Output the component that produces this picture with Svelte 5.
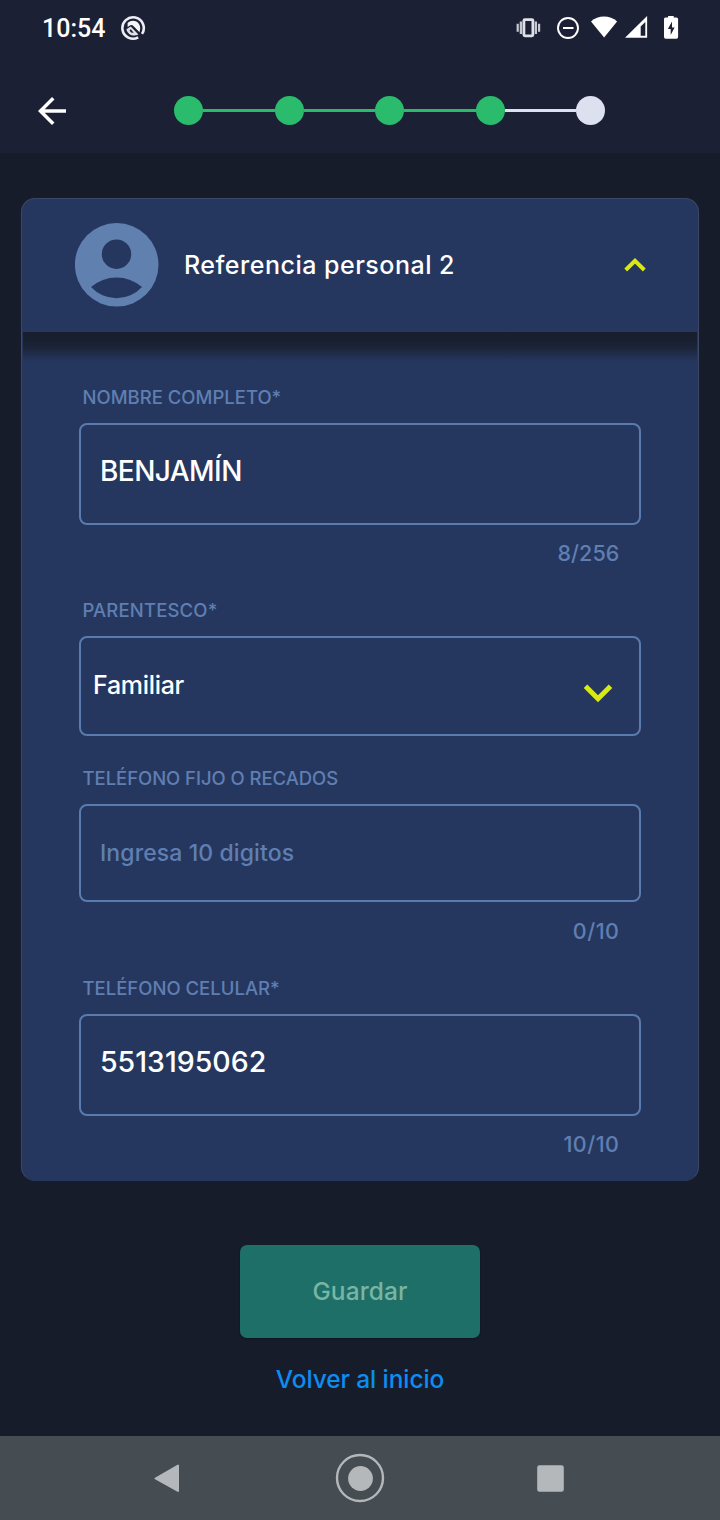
<script>
  const steps = [true, true, true, true, false];
  const fields = [
    { label: 'NOMBRE COMPLETO*', value: 'BENJAMÍN', kind: 'text name', count: '8/256', cls: 'f1' },
    { label: 'PARENTESCO*', value: 'Familiar', kind: 'select', cls: 'f2' },
    { label: 'TELÉFONO FIJO O RECADOS', value: 'Ingresa 10 digitos', kind: 'placeholder', count: '0/10', cls: 'f3' },
    { label: 'TELÉFONO CELULAR*', value: '5513195062', kind: 'text phone', count: '10/10', cls: 'f4' }
  ];
</script>

<div class="screen">
  <header class="top">
    <div class="status">
      <span class="time">10:54</span>
      <svg class="app" width="26" height="26" viewBox="0 0 26 26">
        <path d="M18.200 22.400A10.700 10.700 0 1 1 22 18.900" fill="none" stroke="#eceef4" stroke-width="2.600" />
        <path d="M7.600 8C11 4.600 16.500 5 19 9c1.700 2.800 1.500 5.800.3 8.200L12.600 10.200l-1.800-.3-3.200 2z" fill="#f4f5f9" />
        <path d="M6.400 14.200l4.300-2.600 7.700 7.800c-4.500 2.600-10.700.8-12-5.200z" fill="#dfe1ea" />
        <path d="M9.600 15.200l1.200-.9 2.900 3.500c-2 .2-3.700-.8-4.100-2.600z" fill="#1c2035" />
        <path d="M13.500 12.500l9 9" stroke="#1c2035" stroke-width="1.200" />
      </svg>
      <svg class="sys" width="168" height="28" viewBox="0 0 168 28">
        <g fill="none" stroke="#dfe1e8">
          <rect x="8.900" y="5.600" width="9" height="16.200" rx="1" stroke-width="2.800" />
          <path d="M5.900 7.500v12.500M20.900 7.500v12.500" stroke-width="2.300" stroke="#c6c8d2" />
          <path d="M2.700 9.700v8M24.100 9.700v8" stroke-width="2.200" stroke="#c6c8d2" />
        </g>
        <circle cx="53" cy="14" r="10" fill="none" stroke="#fff" stroke-width="1.900" />
        <path d="M48 14h10.500" stroke="#fff" stroke-width="2" />
        <path d="M76 7.500C83 .9 95 .9 102.100 7.500L89.100 23.500z" fill="#fff" />
        <path d="M110 23.800L132.100 1.900V23.800z" fill="#fff" />
        <path d="M125.700 12.500L130.300 8V21.800H125.700z" fill="#1c2035" />
        <path d="M150.300 3.500h2.800V1.900h5.600v1.600h2.800q1.600 0 1.600 1.600v18q0 1.700-1.700 1.700h-10.700q-1.700 0-1.700-1.700v-18q0-1.600 1.300-1.600z" fill="#fff" />
        <path d="M157 7.500l-4.100 7.500h2.800v6l3.900-7.500h-2.600z" fill="#1c2035" />
      </svg>
    </div>
    <nav class="bar">
      <svg class="back" width="42" height="42" viewBox="0 0 24 24">
        <path fill="#fff" d="M20 11H7.830l5.590-5.590L12 4l-8 8 8 8 1.410-1.410L7.830 13H20z" />
      </svg>
      <div class="steps">
        {#each steps as done, i}
          {#if i}<i class="line" class:done></i>{/if}
          <i class="dot" class:done></i>
        {/each}
      </div>
    </nav>
  </header>

  <main>
    <section class="card">
      <div class="head">
        <svg width="84" height="84" viewBox="0 0 84 84">
          <circle cx="41.700" cy="41.800" r="41.800" fill="#6080b0" />
          <circle cx="41.500" cy="31.200" r="14.700" fill="#26375f" />
          <path d="M16 64A39 39 0 0 1 67 64A34.600 34.600 0 0 1 16 64z" fill="#26375f" />
        </svg>
        <h1>Referencia personal 2</h1>
        <svg class="up" width="22" height="14" viewBox="0 0 22 14">
          <path d="M1.700 12L11 2.800 20.300 12" fill="none" stroke="#d8e916" stroke-width="3.900" />
        </svg>
      </div>
      <div class="body">
        {#each fields as f}
          <div class="field {f.cls}">
            <span class="label">{f.label}</span>
            <div class="box {f.kind}">
              <span>{f.value}</span>
              {#if f.kind === 'select'}
                <svg width="30" height="19" viewBox="0 0 30 19">
                  <path d="M2.500 2.200L15 14.700 27.500 2.200" fill="none" stroke="#d8e916" stroke-width="5" />
                </svg>
              {/if}
            </div>
            {#if f.count}<span class="count">{f.count}</span>{/if}
          </div>
        {/each}
      </div>
    </section>
    <button class="save" disabled><span>Guardar</span></button>
    <a class="home" href="#inicio">Volver al inicio</a>
  </main>

  <footer>
    <svg width="720" height="84" viewBox="0 0 720 84">
      <path d="M155.500 42.500L178 29.500V55z" fill="#b4b8ba" stroke="#b4b8ba" stroke-width="2" stroke-linejoin="round" />
      <circle cx="360" cy="42" r="23" fill="none" stroke="#b4b8ba" stroke-width="2.400" />
      <circle cx="360.500" cy="42.500" r="12.400" fill="#b4b8ba" />
      <rect x="537.200" y="29.200" width="26.600" height="26.600" rx="2.200" fill="#b4b8ba" />
    </svg>
  </footer>
</div>

<style>
  :global(body) { background: #171c2a; }
  .screen {
    width: 720px; height: 1520px; display: flex; flex-direction: column;
    background: #171c2a; font-family: Inter, sans-serif; font-weight: 500; color: #fff; overflow: hidden;
  }
  svg { display: block; flex: none; }
  .top { height: 153px; background: #1c2035; flex: none; }
  .status { height: 56px; display: flex; align-items: center; padding: 0 37px 0 42px; }
  .time { font: 500 25px/28px Roboto, sans-serif; padding-top: 1px; width: 78px; }
  .sys { margin-left: auto; }
  .bar { display: flex; align-items: center; height: 109px; padding-left: 31px; }
  .back { margin-top: 1px; }
  .steps { display: flex; align-items: center; width: 431px; margin-left: 101px; }
  .dot { width: 29px; height: 29px; border-radius: 50%; background: #dce0ef; flex: none; }
  .line { height: 3.500px; flex: 1; background: #dce0ef; }
  .done { background: #2abb6c; }

  main { flex: 1; display: flex; flex-direction: column; align-items: center; padding-top: 45px; }
  .card {
    box-sizing: border-box; width: 678px; height: 983px; border: 1px solid #3c4767;
    border-bottom-color: #26375f; border-radius: 14px; background: #26375f; overflow: hidden;
  }
  .head { height: 133px; display: flex; align-items: center; padding: 0 52px 2px 53px; box-sizing: border-box; }
  h1 { margin: 0 0 0 25px; font-size: 25px; font-weight: 500; line-height: 32px; letter-spacing: 0.500px; white-space: nowrap; }
  .up { margin-left: auto; }
  .body {
    padding: 52px 57px 0; height: 848px; box-sizing: border-box; margin: 0 1px;
    background: linear-gradient(#171e2d 0, #18202f 8px, #1b2439 16px, #202d4b 22px, #26375f 30px) no-repeat;
  }
  .field { display: flex; flex-direction: column; }
  .label { color: #5f7fb2; font-size: 18.500px; line-height: 26px; margin: 0 0 13px 2.500px; white-space: nowrap; }
  .f2 .label { letter-spacing: 0.150px; }
  .f3 .label { letter-spacing: -0.050px; }
  .box {
    height: 102px; box-sizing: border-box; border: 2px solid #5a7bae; border-radius: 8px;
    display: flex; align-items: center; padding: 0 26px 7px 19px; margin: 0 -1px; white-space: nowrap;
  }
  .text { font-size: 28.500px; }
  .name { font-size: 28px; letter-spacing: -0.550px; }
  .select { height: 100px; padding: 0 26px 2px 12px; justify-content: space-between; font-size: 25px; letter-spacing: -0.300px; }
  .select svg { margin-top: 16px; }
  .placeholder { height: 98px; padding-bottom: 0; font-size: 23px; letter-spacing: 0.100px; color: #5f7fb2; }
  .count {
    align-self: flex-end; margin: 15px 20.500px 0 0; font-size: 21.500px; line-height: 26px;
    color: #5f7fb2; letter-spacing: 0.500px;
  }
  .f1 .count { letter-spacing: 0.100px; }
  .f2 { margin-top: 31px; }
  .f3 { margin-top: 29px; }
  .f3 .count { margin-top: 16px; }
  .f4 { margin-top: 31px; }
  .save {
    width: 240px; height: 93px; margin-top: 64px; border: 0; border-radius: 7px; background: #1e6f68;
    box-shadow: 0 1px 2px #10141f; color: #78b5a4; font: 500 24.500px/30px Inter, sans-serif; padding: 0 0 2px; letter-spacing: 0.100px;
  }
  .home { margin-top: 26px; color: #0b8df2; font-size: 24.500px; line-height: 30px; letter-spacing: -0.100px; text-decoration: none; }
  footer { height: 84px; background: #454c52; flex: none; }
</style>
